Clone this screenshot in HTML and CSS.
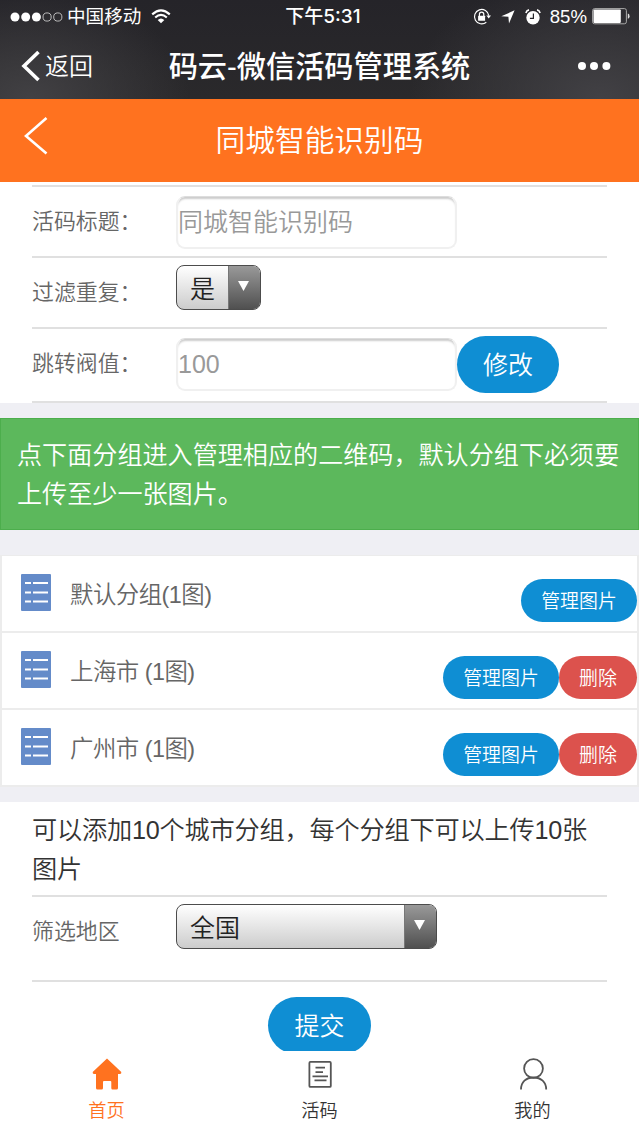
FILE: index.html
```html
<!DOCTYPE html>
<html lang="zh-CN">
    <head>
        <meta charset="UTF-8">
        <title>码云-微信活码管理系统</title>
        <meta name="viewport" content="width=device-width, initial-scale=1.0">
        <link rel="stylesheet" href="styles.css">
    </head>
    <body>
        <header class="top">
            <div class="status">
                <div class="status-left">
                    <svg width="53" height="10" viewBox="0 0 53 10">
                        <g fill="#fff">
                            <circle cx="5" cy="5" r="4.5"/>
                            <circle cx="15.7" cy="5" r="4.5"/>
                            <circle cx="26.4" cy="5" r="4.5"/>
                        </g>
                        <g fill="none" stroke="#ccc" stroke-width="0.9">
                            <circle cx="37.1" cy="5" r="4.1"/>
                            <circle cx="47.8" cy="5" r="4.1"/>
                        </g>
                    </svg>
                    <span class="carrier">中国移动</span>
                    <svg class="wifi" width="20" height="15" viewBox="0 0 20 15">
                        <g fill="none" stroke="#fff" stroke-width="2.1">
                            <path d="M1.2 5.4Q10 -2.6 18.8 5.4"/>
                            <path d="M4.2 8.6Q10 3.2 15.8 8.6"/>
                        </g>
                        <path d="M6.7 11Q10 8 13.3 11L10 14.3Z" fill="#fff"/>
                    </svg>
                </div>
                <div class="clock">下午5:31</div>
                <div class="status-right">
                    <svg width="18" height="18" viewBox="0 0 18 18">
                        <path d="M15.8 7.6A7.2 7.2 0 1 0 13.3 14.2" fill="none" stroke="#fff" stroke-width="1.2"/>
                        <path d="M13.4 7.5H18L15.7 10.6Z" fill="#fff"/>
                        <rect x="5.1" y="7.8" width="7" height="5" rx="0.5" fill="#fff"/>
                        <path d="M6.4 8V6.4a2.2 2.2 0 0 1 4.4 0V8" fill="none" stroke="#fff" stroke-width="1.2"/>
                    </svg>
                    <svg class="arrow" width="14" height="14" viewBox="0 0 14 14">
                        <path d="M13.6 0.3L8 13.6L7.4 6.8L0.3 6.3Z" fill="#fff"/>
                    </svg>
                    <svg class="alarm" width="16" height="16" viewBox="0 0 16 16">
                        <circle cx="8" cy="8.8" r="6.7" fill="#fff"/>
                        <path d="M8.4 4.6V9.3H4.9" fill="none" stroke="#28272b" stroke-width="1.2"/>
                        <path d="M0.9 4Q1.5 1.4 4 0.9M15.1 4Q14.5 1.4 12 0.9" fill="none" stroke="#fff" stroke-width="1.6"/>
                    </svg>
                    <span class="percent">85%</span>
                    <svg width="38" height="17" viewBox="0 0 38 17">
                        <rect x="0.6" y="0.6" width="33.8" height="15.2" rx="2" fill="none" stroke="#aaa" stroke-width="1"/>
                        <rect x="1.5" y="1.5" width="27.3" height="13.4" rx="0.8" fill="#fff"/>
                        <path d="M35.8 5.6Q37.6 6 37.6 8.2T35.8 10.8Z" fill="#ddd"/>
                    </svg>
                </div>
            </div>
            <div class="titlebar">
                <div class="back">
                    <svg width="20" height="32" viewBox="0 0 20 32">
                        <path d="M17.5 2L3 16L17.5 30" fill="none" stroke="#fff" stroke-width="3.6"/>
                    </svg>
                    <span>返回</span>
                </div>
                <h1>码云-微信活码管理系统</h1>
                <svg class="more" width="34" height="10" viewBox="0 0 34 10" fill="#fff">
                    <circle cx="5" cy="5" r="4"/>
                    <circle cx="17" cy="5" r="4"/>
                    <circle cx="29.4" cy="5" r="4"/>
                </svg>
            </div>
        </header>

        <div class="page-head">
            <svg class="page-back" width="24" height="38" viewBox="0 0 24 38">
                <path d="M22.5 1L2 19L22.5 36.5" fill="none" stroke="#fff" stroke-width="2.6"/>
            </svg>
            <h2>同城智能识别码</h2>
        </div>

        <main>
            <section class="form">
                <div class="field">
                    <label>活码标题：</label>
                    <div class="input">同城智能识别码</div>
                </div>
                <div class="field">
                    <label>过滤重复：</label>
                    <div class="select select-short">
                        <span class="value">是</span>
                        <span class="drop"></span>
                    </div>
                </div>
                <div class="field field-last">
                    <label>跳转阀值：</label>
                    <div class="input">100</div>
                    <a class="btn">修改</a>
                </div>
            </section>

            <div class="alert">点下面分组进入管理相应的二维码，默认分组下必须要上传至少一张图片。</div>

            <ul class="groups">
                <li>
                    <svg class="doc" width="30" height="37" viewBox="0 0 30 37">
                        <rect width="30" height="37" rx="1" fill="#648bc9"/>
                        <path d="M4 9h6M12 9h15M4 18.5h6M12 18.5h15M4 27.5h6M12 27.5h15" stroke="#fff" stroke-width="2.2"/>
                    </svg>
                    <span class="name">默认分组(1图)</span>
                    <a class="btn small">管理图片</a>
                </li>
                <li>
                    <svg class="doc" width="30" height="37" viewBox="0 0 30 37">
                        <rect width="30" height="37" rx="1" fill="#648bc9"/>
                        <path d="M4 9h6M12 9h15M4 18.5h6M12 18.5h15M4 27.5h6M12 27.5h15" stroke="#fff" stroke-width="2.2"/>
                    </svg>
                    <span class="name">上海市 (1图)</span>
                    <a class="btn small">管理图片</a>
                    <a class="btn small danger">删除</a>
                </li>
                <li>
                    <svg class="doc" width="30" height="37" viewBox="0 0 30 37">
                        <rect width="30" height="37" rx="1" fill="#648bc9"/>
                        <path d="M4 9h6M12 9h15M4 18.5h6M12 18.5h15M4 27.5h6M12 27.5h15" stroke="#fff" stroke-width="2.2"/>
                    </svg>
                    <span class="name">广州市 (1图)</span>
                    <a class="btn small">管理图片</a>
                    <a class="btn small danger">删除</a>
                </li>
            </ul>

            <section class="add">
                <p>可以添加10个城市分组，每个分组下可以上传10张图片</p>
                <div class="field region">
                    <label>筛选地区</label>
                    <div class="select select-long">
                        <span class="value">全国</span>
                        <span class="drop"></span>
                    </div>
                </div>
                <a class="btn submit">提交</a>
            </section>
        </main>

        <nav class="tabs">
            <a class="tab active">
                <svg width="30" height="32" viewBox="0 0 30 32">
                    <path d="M15 0.6L29.3 14Q29.6 16 28 16H26V30Q26 31.5 24.5 31.5H20.5Q19.3 31.5 19.3 30V24Q19.3 23 18.3 23H12Q11 23 11 24V30Q11 31.5 9.7 31.5H5.5Q4 31.5 4 30V16H2Q0.4 16 0.7 14Z" fill="#ff721f"/>
                </svg>
                <span>首页</span>
            </a>
            <a class="tab">
                <svg width="30" height="32" viewBox="0 0 30 32" fill="none" stroke="#555" stroke-width="1.8">
                    <rect x="4.4" y="3.9" width="21.4" height="25" rx="1"/>
                    <path d="M10.5 9.7h9.5M10.5 14.2h7.5M7.5 18.3h15.5M9.5 22.4h12"/>
                </svg>
                <span>活码</span>
            </a>
            <a class="tab">
                <svg width="30" height="32" viewBox="0 0 30 32" fill="none" stroke="#555" stroke-width="1.8">
                    <circle cx="15.5" cy="10.5" r="9.4"/>
                    <path d="M3 31.5C3 24 8 19.5 15.5 19.5S28.2 24 28.2 31.5"/>
                </svg>
                <span>我的</span>
            </a>
        </nav>
    </body>
</html>
```

FILE: styles.css
```css
* { box-sizing: border-box; }

body {
    margin: 0;
    height: 1136px;
    display: flex;
    flex-direction: column;
    overflow: hidden;
    background-color: #efeff4;
    color: #333;
    font-family: "Liberation Sans", "Noto Sans CJK SC", sans-serif;
    font-weight: 350;
}

h1, h2, p, ul { margin: 0; padding: 0; }

svg { flex: none; display: block; }

/* Phone status bar and browser title */
.top {
    flex: none;
    height: 99px;
    color: white;
    background:
        radial-gradient(ellipse 160px 110px at 30px 100%, #424144, transparent),
        radial-gradient(ellipse 190px 130px at 600px 100%, #424145, transparent),
        linear-gradient(to bottom, #252429, #2a292b);
}

.status {
    height: 32px;
    display: grid;
    grid-template-columns: 1fr auto 1fr;
    align-items: center;
    padding: 0 9px 0 10px;
    font-size: 18.6px;
    line-height: 33px;
    font-weight: 400;
}

.status-left, .status-right {
    display: flex;
    align-items: center;
}

.status-right { justify-content: flex-end; }

.carrier { margin-left: 4px; }

.wifi { margin-left: 10px; }

.clock {
    padding-left: 6px;
    font-family: "Inter", "Noto Sans CJK SC", sans-serif;
    font-size: 19px;
    font-weight: 500;
}

.arrow { margin-left: 10px; }

.alarm { margin-left: 10px; }

.percent { margin: 0 5px 0 9px; }

.titlebar {
    height: 67px;
    display: grid;
    grid-template-columns: 1fr auto 1fr;
    align-items: center;
    padding: 0 21px 0 21px;
}

.back {
    display: flex;
    align-items: center;
    gap: 4px;
    font-size: 24px;
    line-height: 32px;
}

.back span { padding-top: 2px; }

.titlebar h1 {
    padding-top: 2px;
    font-size: 29.2px;
    font-weight: 500;
    line-height: 40px;
}

.more {
    justify-self: end;
    margin-right: 7px;
}

.page-head {
    flex: none;
    height: 83px;
    display: grid;
    grid-template-columns: 1fr auto 1fr;
    align-items: center;
    padding: 0 24px;
    color: white;
    background-color: #ff721f;
}

.page-back { margin-bottom: 9px; }

.page-head h2 {
    font-size: 29.7px;
    font-weight: 350;
    line-height: 40px;
}

main {
    flex: 1;
    min-height: 0;
    overflow: hidden;
}

.form {
    height: 221px;
    padding: 3px 32px 0;
    background-color: white;
}

.field {
    height: 71px;
    display: flex;
    align-items: flex-start;
    border-top: 2px solid #e0e0e0;
}

.field-last {
    height: 76px;
    border-bottom: 2px solid #e0e0e0;
}

label {
    width: 144px;
    padding-top: 19px;
    color: #666;
    font-size: 21.9px;
    line-height: 32px;
    white-space: nowrap;
}

.input {
    width: 281px;
    height: 53px;
    margin-top: 9px;
    border: 2px solid #f0f0f0;
    border-top: 1px solid #ddd;
    border-radius: 9px;
    box-shadow: inset 0 3px 2px -1px #ccc;
    color: #999;
    font-size: 25px;
    line-height: 51px;
}

.select {
    height: 45px;
    display: flex;
    margin-top: 7px;
    border: 1.5px solid #4c4c4c;
    border-radius: 8px;
    overflow: hidden;
    background: linear-gradient(to bottom, #fff, #ccc);
    color: #222;
    font-size: 25px;
    line-height: 46px;
}

.select-short { width: 85px; }

.select-long { width: 261px; }

.value {
    flex: 1;
    padding-left: 13px;
}

.drop {
    width: 32px;
    border-left: 1px solid #777;
    background: linear-gradient(to bottom, #999, #505050);
}

.drop::before {
    content: "";
    display: block;
    margin: 15px auto 0 9px;
    width: 11px;
    height: 10px;
    background-color: white;
    clip-path: polygon(0 0, 100% 0, 50% 100%);
}

.btn {
    flex: none;
    height: 57px;
    width: 102px;
    margin-top: 7px;
    border-radius: 29px;
    background-color: #0f8ed3;
    color: white;
    font-size: 25px;
    line-height: 58px;
    text-align: center;
}

.alert {
    height: 112px;
    margin: 15px 0 25px;
    padding: 17px 14px 0 16px;
    border: 1px solid #4cae4c;
    background-color: #5cb85c;
    color: white;
    font-size: 25.1px;
    line-height: 38.5px;
}

.groups {
    list-style: none;
    border: 2px solid #ececec;
    border-top-width: 1px;
    background-color: white;
}

.groups li {
    height: 77px;
    display: flex;
    align-items: flex-start;
}

.groups li:first-child { height: 75px; }

.groups li + li { border-top: 2px solid #ececec; }

.doc { margin: 18px 19px 0 19px; }

.name {
    flex: 1;
    padding-top: 21px;
    color: #666;
    font-size: 23.4px;
    line-height: 36px;
    letter-spacing: -0.5px;
}

.groups .small {
    width: 116px;
    height: 43px;
    margin-top: 23px;
    border-radius: 22px;
    font-size: 18.9px;
    line-height: 45px;
}

.groups .danger {
    width: 78px;
    background-color: #dc524d;
}

.add {
    margin-top: 15px;
    height: 300px;
    padding: 9px 32px 0;
    background-color: white;
}

.add p {
    height: 84px;
    font-size: 25.2px;
    line-height: 38.5px;
    letter-spacing: -0.2px;
}

.region {
    height: 87px;
    border-bottom: 2px solid #e0e0e0;
}

.submit {
    display: block;
    width: 103px;
    margin: 15px auto 0;
}

.tabs {
    flex: none;
    height: 85px;
    display: flex;
    background-color: white;
}

.tab {
    flex: 1;
    display: flex;
    flex-direction: column;
    align-items: center;
    padding-top: 7px;
    font-size: 18.2px;
    line-height: 28px;
    gap: 7px;
}

.active { color: #ff721f; }
```
